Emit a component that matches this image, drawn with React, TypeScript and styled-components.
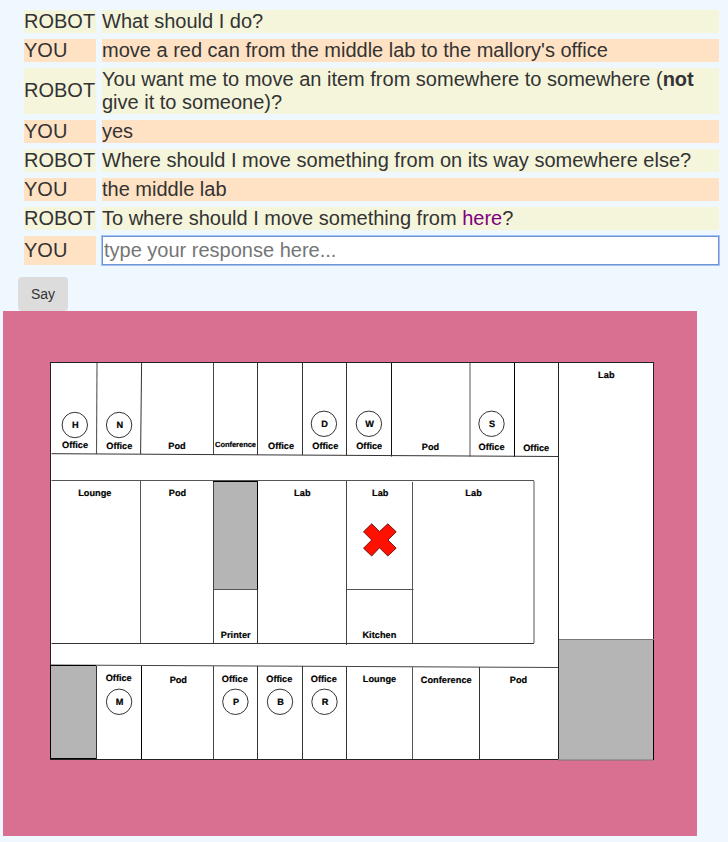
import React from "react";
import styled, { createGlobalStyle } from "styled-components";

const GlobalStyle = createGlobalStyle`
  * { box-sizing: border-box; }
  body {
    margin: 0;
    background: #f0f8ff;
    color: #333;
    font-family: "Liberation Sans", Arial, sans-serif;
  }
`;

const Page = styled.main`
  width: 728px;
  height: 842px;
  overflow: hidden;
`;

const Dialog = styled.div`
  display: flex;
  flex-direction: column;
  gap: 6px;
  padding: 10px 9px 0 24px;
  font-size: 20px;
  line-height: 23px;
`;

const Turn = styled.div`
  display: grid;
  grid-template-columns: 72px 617px;
  column-gap: 6px;
`;

const Speaker = styled.div<{ $user?: boolean; $tall?: boolean }>`
  display: flex;
  align-items: center;
  padding-bottom: ${(p) => (p.$tall ? "1px" : "0")};
  background: ${(p) => (p.$user ? "#ffe2c4" : "#f5f5dc")};
`;

const Message = styled.div<{ $user?: boolean }>`
  background: ${(p) => (p.$user ? "#ffe2c4" : "#f5f5dc")};
`;

const Place = styled.span`
  color: purple;
`;

const ResponseInput = styled.input`
  width: 617px;
  height: 29px;
  padding: 1px;
  border: 1px solid #6f94d6;
  outline: 0;
  box-shadow: 0 0 0 1px #a3c3f3;
  background: #fff;
  color: #333;
  font: 20px "Liberation Sans", Arial, sans-serif;
  &::placeholder { color: #757575; opacity: 1; }
`;

const SayButton = styled.button`
  display: block;
  width: 50px;
  height: 34px;
  margin: 12px 0 0 18px;
  padding: 0;
  border: 0;
  border-radius: 4px;
  background: #dcdcdc;
  color: #333;
  font: 14px "Liberation Sans", Arial, sans-serif;
`;

const FloorPlan = styled.svg`
  display: block;
  width: 694px;
  height: 525px;
  margin-left: 3px;
  background: #da7091;
`;

const RoomLabel = styled.text<{ $small?: boolean }>`
  font: bold ${(p) => (p.$small ? "7.5px" : "9.2px")} "Liberation Sans", Arial, sans-serif;
  text-anchor: middle;
  text-rendering: geometricPrecision;
  fill: #000;
  stroke: #000;
  stroke-width: 0.2px;
`;

type TurnData = { user?: boolean; tall?: boolean; text: React.ReactNode };

const turns: TurnData[] = [
  { text: "What should I do?" },
  { user: true, text: "move a red can from the middle lab to the mallory's office" },
  { tall: true, text: <>You want me to move an item from somewhere to somewhere (<b>not</b> give it to someone)?</> },
  { user: true, text: "yes" },
  { text: "Where should I move something from on its way somewhere else?" },
  { user: true, text: "the middle lab" },
  { text: <>To where should I move something from <Place>here</Place>?</> },
];

// Walls: x1, y1, x2, y2, stroke, width
const walls: [number, number, number, number, string, number][] = [
  [97, 363, 96.5, 454, "#555", 1.1],
  [141.6, 363, 140.6, 454, "#333", 1],
  [213.5, 363, 213.5, 455, "#444", 1],
  [257.5, 363, 257.5, 455, "#333", 1],
  [302.5, 363, 302.5, 455, "#333", 1],
  [346.5, 363, 346.5, 455.5, "#333", 1],
  [391.5, 363, 391.5, 456.5, "#111", 1],
  [470, 363, 470, 456.5, "#aaa", 2],
  [514.5, 363, 514.5, 457, "#000", 1],
  [558.5, 363, 558.5, 759, "#222", 1],
  [51.5, 453.7, 558, 456.5, "#333", 1],
  [51.5, 480.5, 534, 480.5, "#555", 1],
  [51.5, 643.5, 534, 643.5, "#333", 1],
  [534, 481, 534, 643, "#aaa", 2],
  [140.5, 481, 140.5, 643, "#555", 1],
  [213.5, 481, 213.5, 643, "#444", 1],
  [257.5, 481, 257.5, 643, "#333", 1],
  [346.5, 481, 346.5, 645, "#444", 1],
  [412.5, 482, 412.5, 643, "#555", 1],
  [346.5, 589.5, 413.5, 589.5, "#555", 1],
  [51, 665, 558, 667.5, "#444", 1],
  [96.5, 666, 96.5, 759, "#333", 1],
  [141.5, 666, 141.5, 759, "#000", 1],
  [213.5, 666, 213.5, 759, "#444", 1],
  [257.5, 666, 257.5, 759, "#333", 1],
  [302.5, 666, 302.5, 760, "#333", 1],
  [346.5, 667, 346.5, 760, "#333", 1],
  [412.5, 667, 412.5, 759, "#555", 1],
  [479.5, 667, 479.5, 759, "#333", 1],
];

// Room names: text, centre x, baseline, drawn length
const rooms: [string, number, number, number][] = [
  ["Office", 75, 448.3, 26], ["Office", 119.3, 449, 26], ["Pod", 177, 449, 17.3],
  ["Office", 281, 448.7, 26], ["Office", 325.3, 449.2, 26],
  ["Office", 369.2, 449.2, 26], ["Pod", 430.5, 450, 17.3], ["Office", 491.5, 450, 26],
  ["Office", 536.2, 451, 26], ["Lab", 606.3, 378, 16.5], ["Lounge", 94.8, 496.3, 33.3],
  ["Pod", 177.5, 496.3, 17.3], ["Lab", 302.3, 496.3, 16.5], ["Lab", 380.2, 496.3, 16.5],
  ["Lab", 473.5, 496.3, 16.5], ["Printer", 235.7, 637.6, 30], ["Kitchen", 379.4, 637.6, 34],
  ["Office", 118.7, 680.6, 26], ["Pod", 178.3, 682.8, 17.3], ["Office", 234.8, 682.1, 26],
  ["Office", 279.3, 682.1, 26], ["Office", 323.8, 682.1, 26], ["Lounge", 379.5, 682, 33.3],
  ["Conference", 446.2, 682.8, 51], ["Pod", 518.5, 682.8, 17.3],
];

const people: [string, number, number][] = [
  ["H", 74.8, 425], ["N", 119.1, 425], ["D", 323.9, 423.8], ["W", 368.9, 423.8],
  ["S", 491.5, 423.8], ["M", 119.1, 701.8], ["P", 235.4, 701.8], ["B", 280, 701.8],
  ["R", 324.5, 701.8],
];

function OfficeMap() {
  return (
    <FloorPlan viewBox="3 311 694 525" aria-label="Floor plan">
      <rect x="50.5" y="362.5" width="603" height="397" fill="#fff" stroke="#222" />
      <rect x="213.5" y="481" width="44" height="108.5" fill="#b5b5b5" stroke="#555" />
      <rect x="50.5" y="665.5" width="46" height="93.5" fill="#b5b5b5" />
      <rect x="558.5" y="639.5" width="95" height="120.5" fill="#b5b5b5" stroke="#777" />
      {walls.map(([x1, y1, x2, y2, stroke, w], i) => (
        <line key={i} x1={x1} y1={y1} x2={x2} y2={y2} stroke={stroke} strokeWidth={w} />
      ))}
      <path d="M213 481.5H257.5V589M50.5 665V758.5H96M653.5 640V760M51 665.5H96" fill="none" stroke="#000" />
      {rooms.map(([name, x, y, length], i) => (
        <RoomLabel key={i} x={x} y={y} textLength={length}>{name}</RoomLabel>
      ))}
      <RoomLabel $small x={235.5} y={447.4} textLength={41}>Conference</RoomLabel>
      {people.map(([initial, x, y]) => (
        <g key={initial}>
          <circle cx={x} cy={y} r="12.7" fill="#fff" stroke="#333" strokeWidth="1" />
          <RoomLabel x={x + 0.6} y={y + 3.3}>{initial}</RoomLabel>
        </g>
      ))}
      <path
        d="M371.7 523.8L379.5 531.6L387.8 523.8L396.2 531.8L388 540L396.2 548.2L387.8 556L379.5 547.8L371.7 556L363.5 548.2L371.7 540L363.5 531.8Z"
        fill="#ff1000"
        stroke="#400"
        strokeWidth="0.8"
      />
    </FloorPlan>
  );
}

export default function App() {
  return (
    <>
      <GlobalStyle />
      <Page>
        <Dialog>
          {turns.map((turn, i) => (
            <Turn key={i}>
              <Speaker $user={turn.user} $tall={turn.tall}>{turn.user ? "YOU" : "ROBOT"}</Speaker>
              <Message $user={turn.user}>{turn.text}</Message>
            </Turn>
          ))}
          <Turn>
            <Speaker $user>YOU</Speaker>
            <ResponseInput placeholder="type your response here..." />
          </Turn>
        </Dialog>
        <SayButton type="button">Say</SayButton>
        <OfficeMap />
      </Page>
    </>
  );
}
